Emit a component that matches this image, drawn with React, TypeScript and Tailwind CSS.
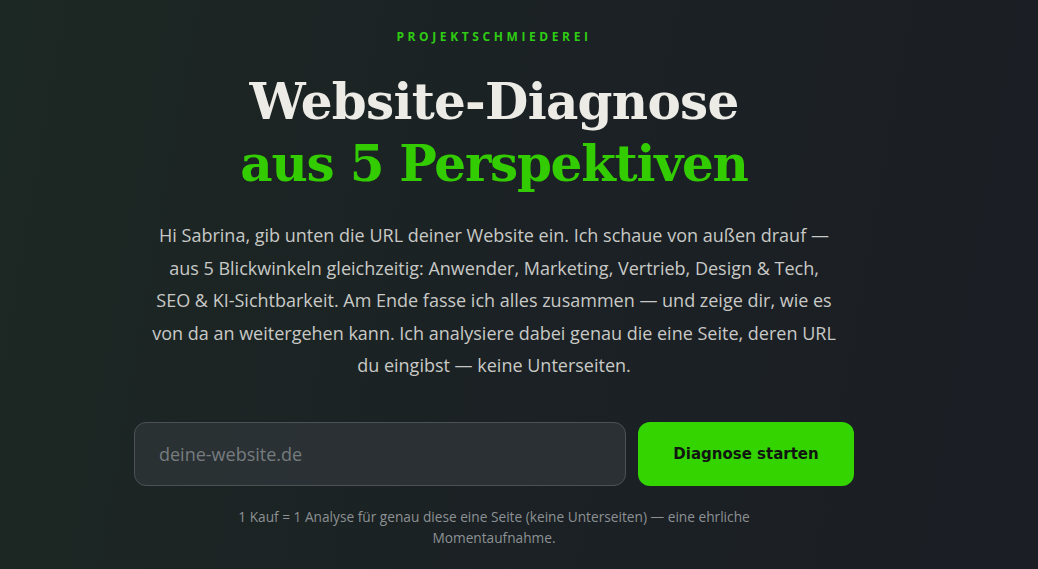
export default function App() {
  return (
    <div className="min-h-[569px] w-full bg-[linear-gradient(100deg,#1c2823_0%,#1b2124_50%,#1b1e24_100%)]">
      <main className="flex flex-col items-center pr-[50px] pt-[29px]">
        <p className="font-['Open_Sans',sans-serif] text-[12px] font-bold tracking-[0.3em] text-[#2fcc14] leading-[16px]">
          PROJEKTSCHMIEDEREI
        </p>

        <h1 className="mt-[26px] text-center font-['DejaVu_Serif',serif] text-[50px] font-bold leading-[62px] tracking-[-0.015em]">
          <span className="block text-[#ecebe6]">Website-Diagnose</span>
          <span className="block tracking-[-0.025em] text-[#33cc00]">aus 5 Perspektiven</span>
        </h1>

        <p className="mt-[24px] max-w-[720px] text-center font-['Open_Sans',sans-serif] text-[18px] leading-[32.6px] text-[#c8c9c6]">
          Hi Sabrina, gib unten die URL deiner Website ein. Ich schaue von außen drauf —
          <br />
          aus 5 Blickwinkeln gleichzeitig: Anwender, Marketing, Vertrieb, Design &amp; Tech,
          <br />
          SEO &amp; KI-Sichtbarkeit. Am Ende fasse ich alles zusammen — und zeige dir, wie es
          <br />
          von da an weitergehen kann. Ich analysiere dabei genau die eine Seite, deren URL
          <br />
          du eingibst — keine Unterseiten.
        </p>

        <form className="mt-[40px] flex w-[720px] gap-3" onSubmit={(e) => e.preventDefault()}>
          <input
            type="text"
            placeholder="deine-website.de"
            className="h-16 flex-1 rounded-xl border border-[#4b5156] bg-[linear-gradient(100deg,#2a3133,#2b3035)] px-6 font-['Open_Sans',sans-serif] text-[18px] text-[#e5e5e5] placeholder:text-[#767c7f] outline-none"
          />
          <button
            type="submit"
            className="h-16 w-[216px] rounded-xl bg-[#33d400] font-['DejaVu_Sans',sans-serif] text-[15px] font-bold text-[#111511]"
          >
            Diagnose starten
          </button>
        </form>

        <p className="mt-[20px] max-w-[560px] text-center font-['Open_Sans',sans-serif] text-[13.7px] leading-[21px] text-[#8d9194]">
          1 Kauf = 1 Analyse für genau diese eine Seite (keine Unterseiten) — eine ehrliche Momentaufnahme.
        </p>
      </main>
    </div>
  )
}
